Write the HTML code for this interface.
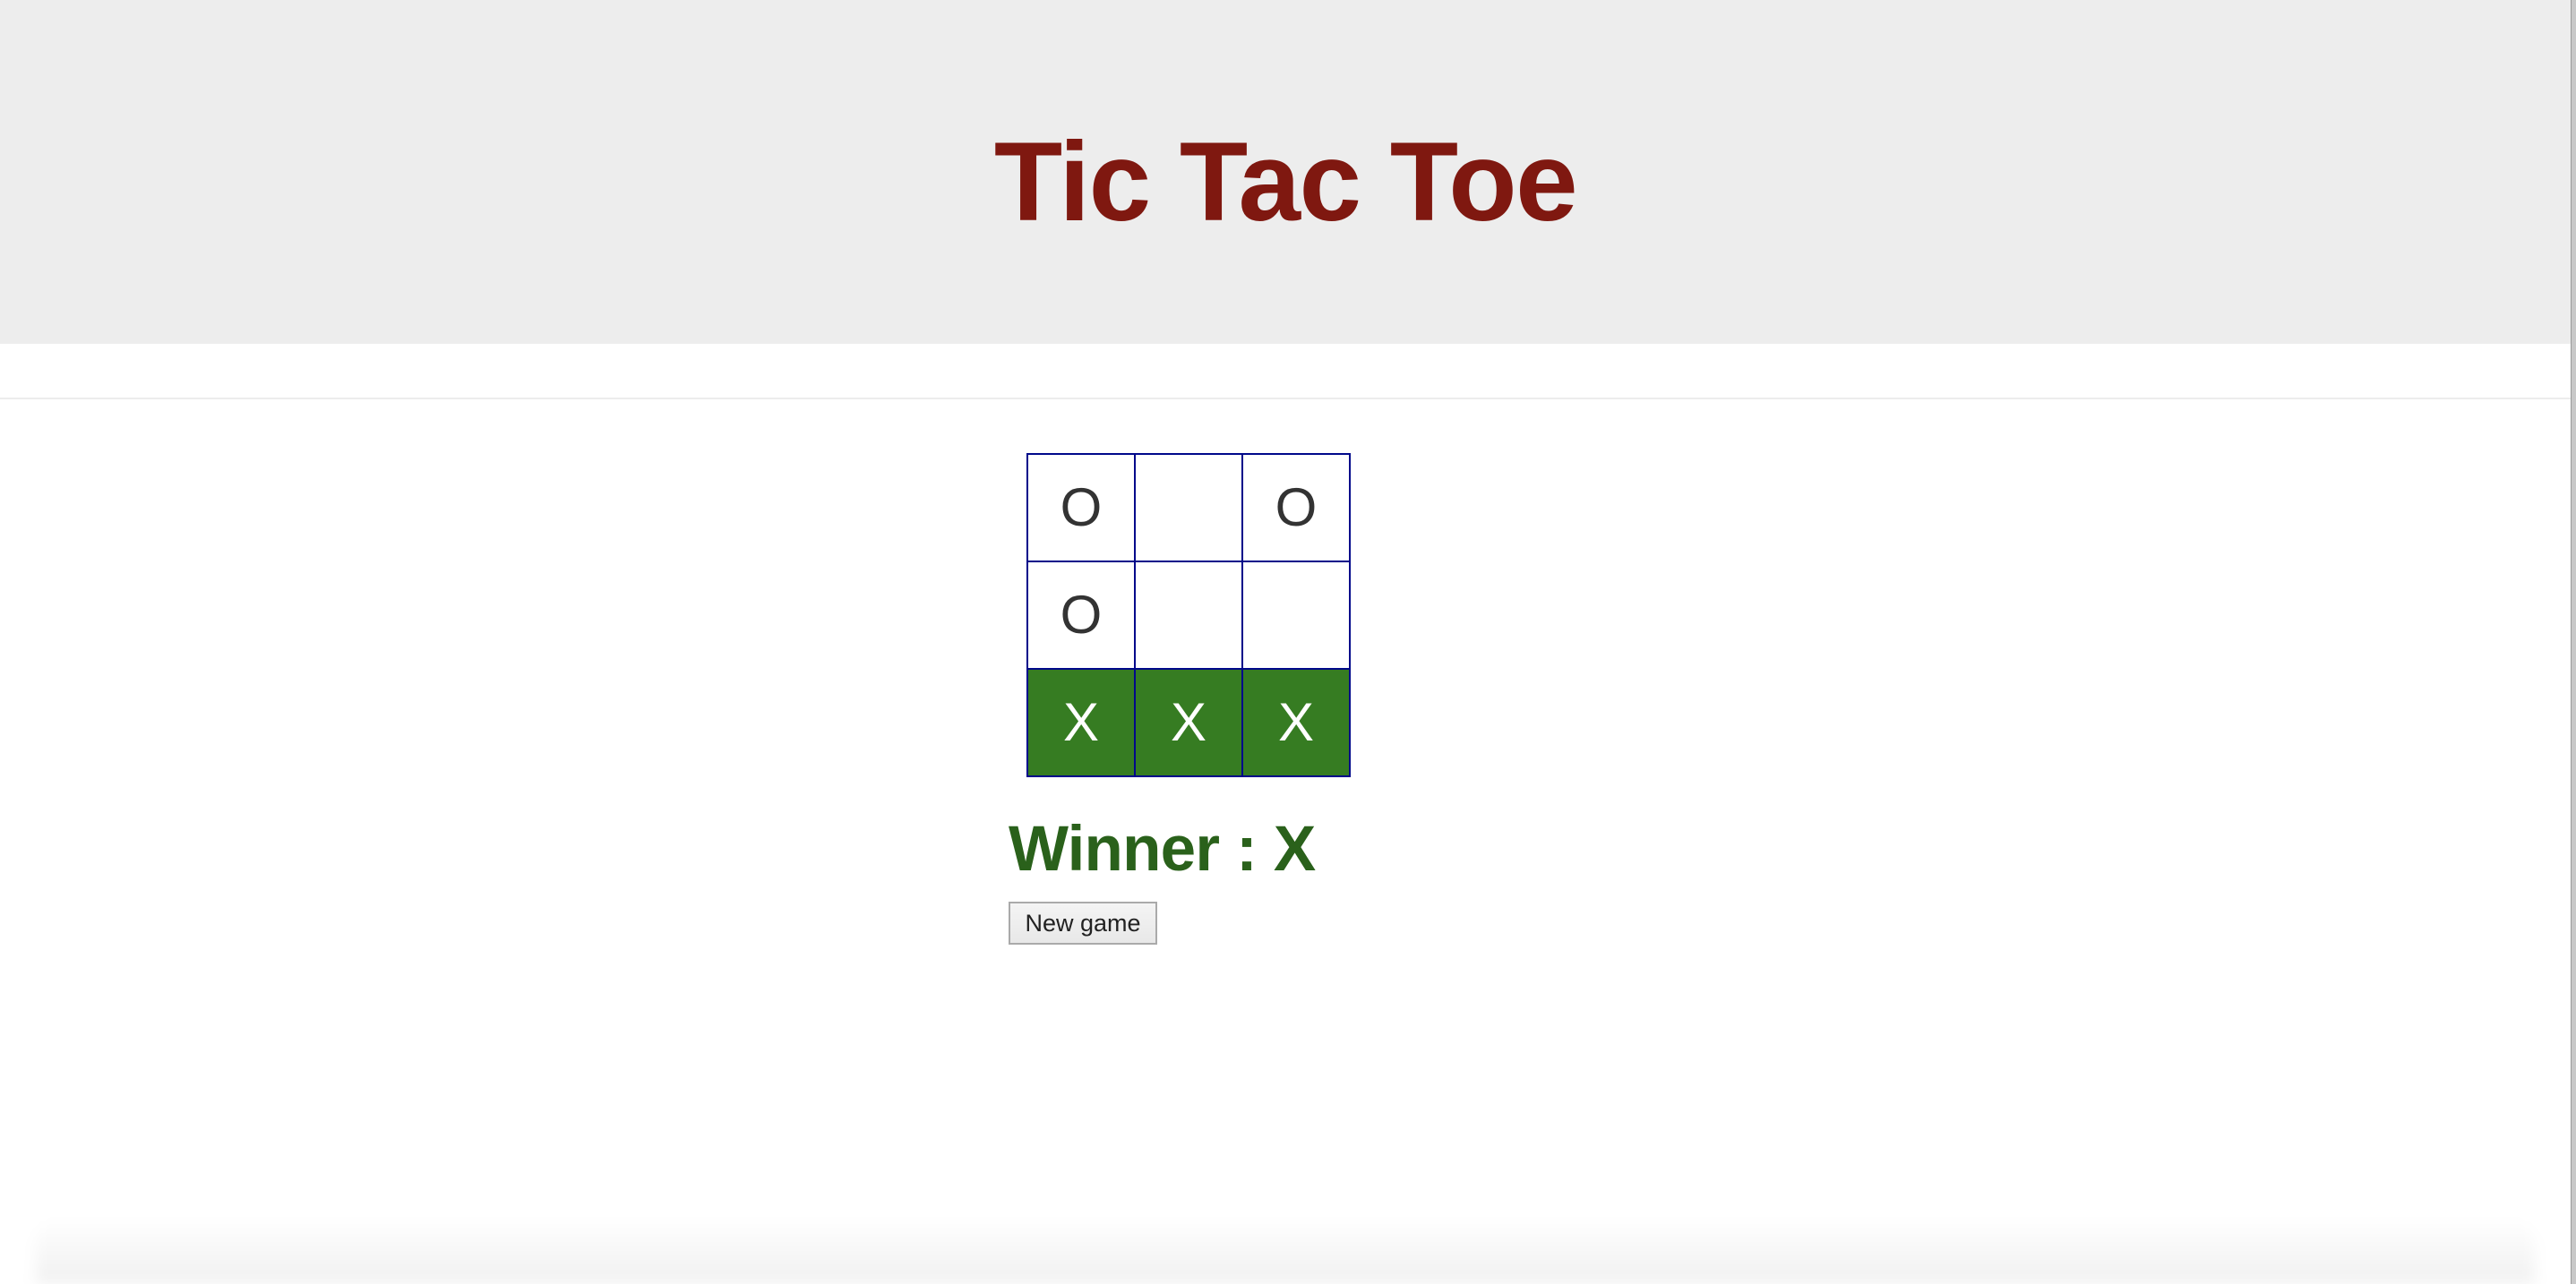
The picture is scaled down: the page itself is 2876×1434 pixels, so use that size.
<!DOCTYPE html>
<html><head><meta charset="utf-8"><style>
html,body{margin:0;padding:0;width:2876px;height:1434px;overflow:hidden;background:#fff;font-family:"Liberation Sans",Arial,sans-serif;position:relative}
.hdr{position:absolute;left:0;top:0;width:2870px;height:384px;background:#ededed}
.hdr h1{position:absolute;left:0;width:2870px;top:0;margin:0;text-align:center;font-size:125px;font-weight:bold;color:#7f1810;letter-spacing:-1.5px;line-height:1;padding-top:141px}
.line{position:absolute;left:0;top:444px;width:2870px;height:2px;background:#ececec}
.sb{position:absolute;left:2870px;top:0;width:6px;height:1434px;background:#c8c8c8;border-left:1px solid #999}
table{position:absolute;left:1146px;top:506px;border-collapse:collapse}
td{width:118px;height:118px;border:2px solid #00088a;padding:0;text-align:center;vertical-align:middle;font-size:60px;color:#333;line-height:1}
td.w{background:#367c22;color:#fff}
.win{position:absolute;left:1126px;top:913px;font-size:71px;font-weight:bold;color:#2a611b;line-height:1;letter-spacing:-0.8px;margin:0}
button{position:absolute;left:1126px;top:1007px;width:166px;height:48px;font-family:"Liberation Sans",Arial,sans-serif;font-size:27px;color:#222;background:linear-gradient(#f4f4f4,#e8e8e8);border:2px solid #aaa;padding:0}
.shadow{position:absolute;left:40px;top:1360px;width:2790px;height:74px;background:linear-gradient(rgba(0,0,0,0),rgba(0,0,0,0.06));border-radius:30px 30px 0 0;filter:blur(8px)}
</style></head><body>
<div class="hdr"><h1>Tic Tac Toe</h1></div>
<div class="line"></div>
<table>
<tr><td>O</td><td></td><td>O</td></tr>
<tr><td>O</td><td></td><td></td></tr>
<tr><td class="w">X</td><td class="w">X</td><td class="w">X</td></tr>
</table>
<div class="win">Winner : X</div>
<button>New game</button>
<div class="shadow"></div>
<div class="sb"></div>
</body></html>
